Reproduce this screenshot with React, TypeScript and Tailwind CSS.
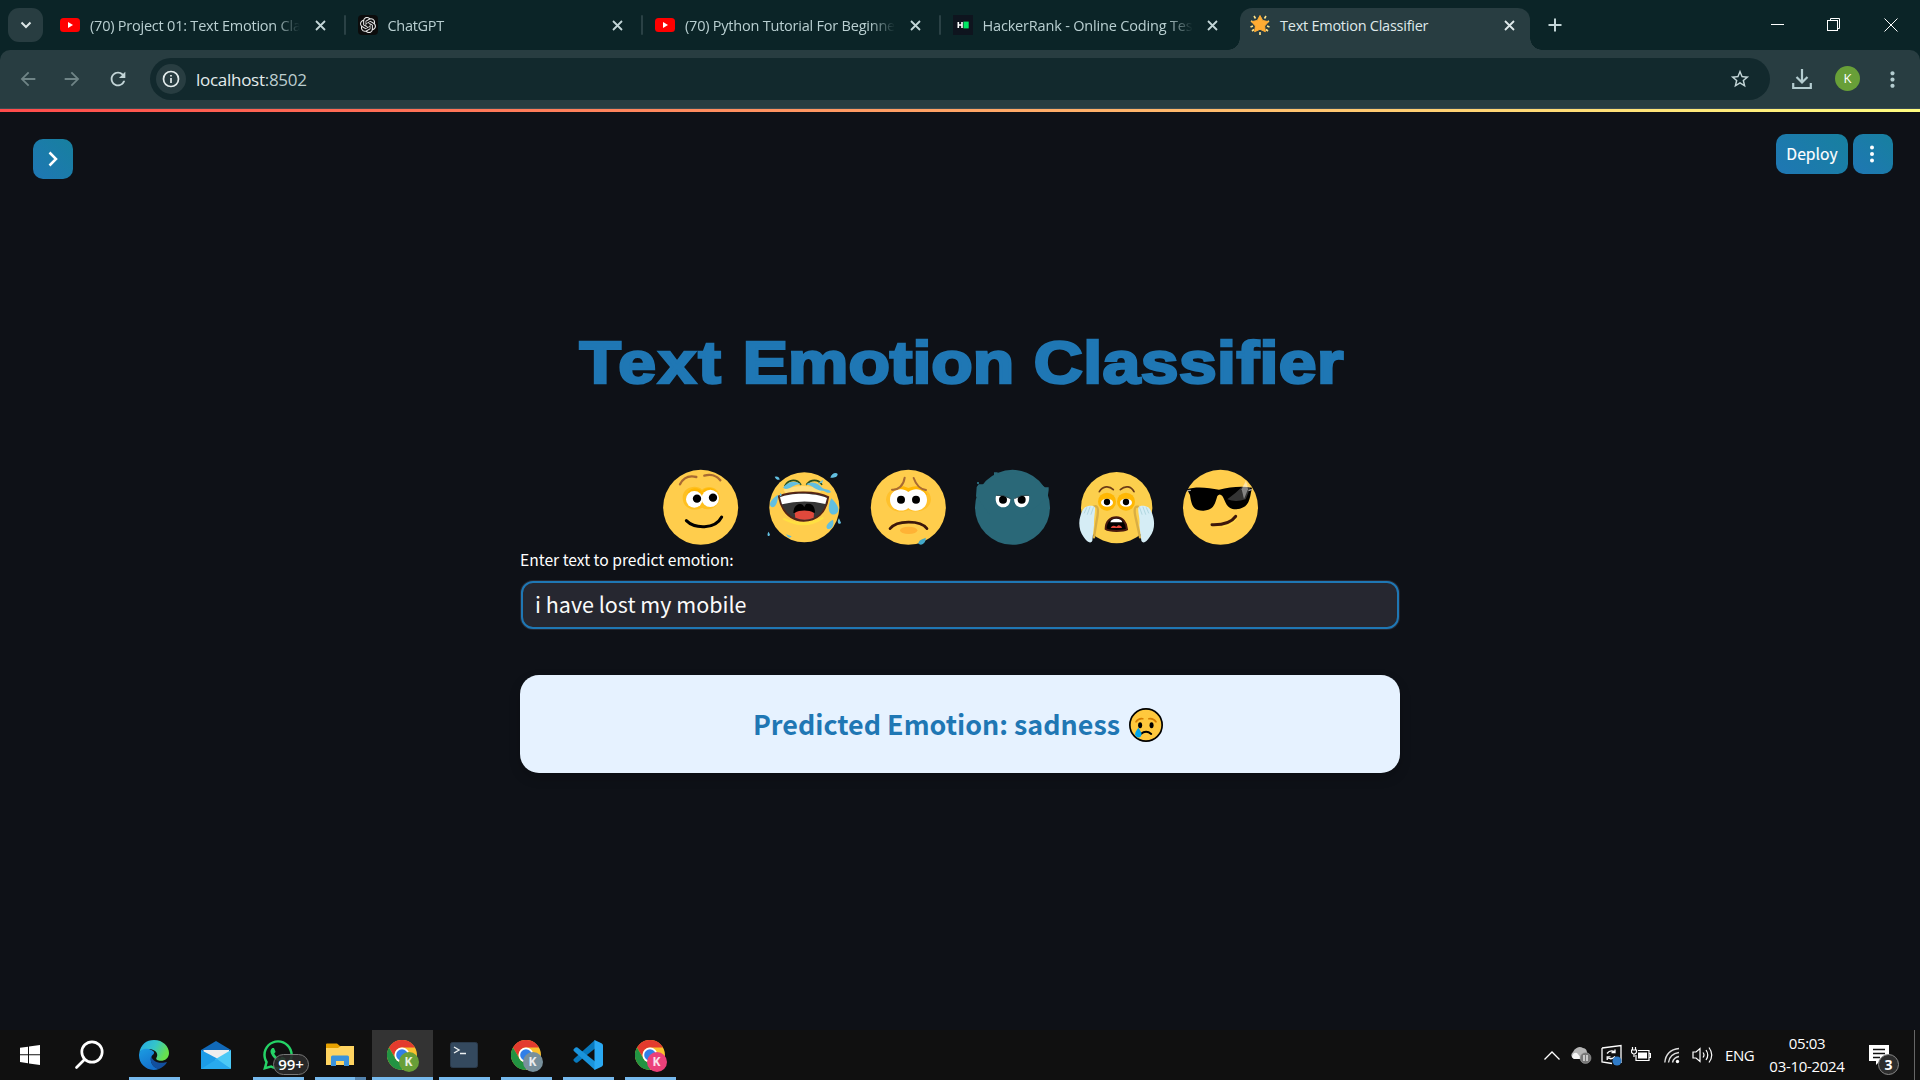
import React from 'react';
import { SiOpenai } from 'react-icons/si';
import { FaWhatsapp } from 'react-icons/fa';
import { MdArrowBack, MdArrowForward, MdRefresh, MdStarBorder, MdMoreVert } from 'react-icons/md';

const CloseX = () => (
  <svg className="h-[11px] w-[11px] shrink-0" viewBox="0 0 11 11" stroke="currentColor" strokeWidth="1.8">
    <path d="M1 1L10 10M10 1L1 10" />
  </svg>
);

const YouTube = () => (
  <svg className="h-5 w-5 shrink-0" viewBox="0 0 20 20">
    <rect x="0" y="3" width="20" height="14" rx="3.5" fill="#f00" />
    <path d="M8 7L13 10L8 13Z" fill="#fff" />
  </svg>
);

const ChatIcon = () => (
  <span className="flex h-5 w-5 shrink-0 items-center justify-center rounded-[4px] bg-[#0c0c0c]">
    <SiOpenai className="h-4 w-4 text-[#e8e8e8]" />
  </span>
);

const HackerRank = () => (
  <svg className="h-5 w-5 shrink-0" viewBox="0 0 20 20">
    <rect width="20" height="20" fill="#0e141e" />
    <path d="M5.3 7V13M9 7V13M5 10H9" stroke="#fff" strokeWidth="1.6" />
    <rect x="10.5" y="6.6" width="5.2" height="6.8" fill="#00ea64" />
  </svg>
);

const StarFavicon = () => (
  <svg className="h-5 w-5 shrink-0" viewBox="0 0 20 20">
    <path d="M4 1L5.5 3.5M16 1L14.5 3.5M.5 12L3 11M19.500 12L17 11M10 17V20M2 16L4 14.500M18 16L16 14.500M1 6L3 7M19 6L17 7" stroke="#ffe38a" strokeWidth="1.6" />
    <path d="M10 0.500L12.700 5.500L18.500 6.700L14.600 11L15.400 16.700L10 14.300L4.600 16.700L5.400 11L1.500 6.700L7.300 5.500Z" fill="#ffac33" stroke="#ffac33" strokeLinejoin="round" />
  </svg>
);

const Tab = ({ icon, title, tracking, sep }: { icon: React.ReactNode; title: string; tracking: string; sep?: boolean }) => (
  <div className="flex h-[34px] w-[297.500px] shrink-0 items-center">
    {icon}
    <span className={'ml-[10px] w-[210px] overflow-hidden whitespace-nowrap pt-[2px] text-[14.500px] text-[#b9cfd1] [mask-image:linear-gradient(to_right,black_184px,transparent_210px)] ' + tracking}>{title}</span>
    <span className="ml-[14.500px] flex text-[#c3d5d7]"><CloseX /></span>
    {sep && <span className="ml-[18px] h-5 w-[2px] rounded bg-[#2a4145]" />}
  </div>
);

const TabStrip = () => (
  <div className="flex h-[50px] items-start bg-[#0b2427]">
    <div className="ml-2 mt-2 flex h-[34px] w-[35px] shrink-0 items-center justify-center rounded-[11px] bg-[#283d41]">
      <svg width="12" height="8" viewBox="0 0 12 8" fill="none" stroke="#dce6e6" strokeWidth="2"><path d="M1.500 1.500L6 6L10.500 1.500" /></svg>
    </div>
    <div className="ml-[17px] mt-2 flex w-[1180px] shrink-0">
      <Tab icon={<YouTube />} title="(70) Project 01: Text Emotion Cla" tracking="tracking-[-0.22px]" sep />
      <Tab icon={<ChatIcon />} title="ChatGPT" tracking="tracking-[-0.3px]" sep />
      <Tab icon={<YouTube />} title="(70) Python Tutorial For Beginne" tracking="tracking-[-0.22px]" sep />
      <Tab icon={<HackerRank />} title="HackerRank - Online Coding Tes" tracking="tracking-[-0.18px]" />
    </div>
    <div className="relative mt-2 flex h-[42px] w-[290px] shrink-0 items-start rounded-t-[12px] bg-[#283d41]">
      <span className="absolute -left-3 bottom-0 h-3 w-3 bg-[radial-gradient(circle_at_0_0,transparent_11.500px,#283d41_12px)]" />
      <span className="absolute -right-3 bottom-0 h-3 w-3 bg-[radial-gradient(circle_at_100%_0,transparent_11.500px,#283d41_12px)]" />
      <div className="flex h-[34px] w-full items-center pl-[10px] text-[#dfe9ea]">
        <StarFavicon />
        <span className="ml-[10px] w-[224px] whitespace-nowrap pt-[2px] text-[14.500px] tracking-[-0.25px]">Text Emotion Classifier</span>
        <CloseX />
      </div>
    </div>
    <svg className="ml-[18px] mt-[18px] shrink-0" width="14" height="14" viewBox="0 0 14 14" stroke="#c3d5d7" strokeWidth="2"><path d="M7 .5V13.500M.5 7H13.500" /></svg>
    <svg className="ml-[209px] mt-[17px] shrink-0" width="13" height="14" viewBox="0 0 13 14" stroke="#fff"><path d="M0 7.500H13" /></svg>
    <svg className="ml-[43px] mt-[17px] shrink-0" width="14" height="15" viewBox="0 0 14 15" stroke="#fff" fill="none"><rect x=".5" y="3.500" width="10" height="10" /><path d="M3.500 3.500V1.500H12.500V11.500H10.500" /></svg>
    <svg className="ml-[43px] mt-[18px] shrink-0" width="14" height="14" viewBox="0 0 14 14" stroke="#fff"><path d="M.5 .5L13.500 13.500M13.500 .5L.5 13.500" /></svg>
  </div>
);

const Toolbar = () => (
  <div className="bg-[#0b2427]">
    <div className="flex h-[59px] items-center rounded-t-[10px] border-b border-[#3b4c52] bg-[#283d41]">
      <MdArrowBack className="ml-[17px] h-[22px] w-[22px] shrink-0 text-[#6f8486]" />
      <MdArrowForward className="ml-[22px] h-[22px] w-[22px] shrink-0 text-[#6f8486]" />
      <MdRefresh className="ml-[24px] h-[22px] w-[22px] shrink-0 text-[#c3d5d7]" />
      <div className="ml-[21px] flex h-[42px] w-[1620px] shrink-0 items-center rounded-full bg-[#12292d]">
        <span className="ml-[6px] flex h-[30px] w-[30px] items-center justify-center rounded-full bg-[#283d41]">
          <svg width="18" height="18" viewBox="0 0 18 18" fill="none" stroke="#e3ecec"><circle cx="9" cy="9" r="7.500" strokeWidth="1.700" /><path d="M9 8V13M9 5V6.500" strokeWidth="1.700" /></svg>
        </span>
        <span className="ml-[10px] pt-px text-[17px] tracking-[-0.280px] text-[#e3ecec]">localhost<span className="text-[#bccdcf]">:8502</span></span>
        <MdStarBorder className="ml-auto mr-[19px] h-[22px] w-[22px] text-[#c3d5d7]" />
      </div>
      <svg className="ml-[22px] shrink-0" width="20" height="22" viewBox="0 0 20 22" fill="none" stroke="#b4cdd0" strokeWidth="2.200"><path d="M10 1V14M4.500 9L10 14.500L15.500 9M1.200 15V20H18.800V15" /></svg>
      <span className="mb-px ml-[23px] flex h-[25px] w-[25px] shrink-0 items-center justify-center rounded-full bg-[#689f38] text-[13px] text-white">K</span>
      <MdMoreVert className="ml-[20px] h-[25px] w-[25px] shrink-0 text-[#b4cdd0]" />
    </div>
  </div>
);

const Emojis = () => (
  <div className="flex justify-center gap-6">
    <svg className="h-20 w-20" viewBox="60 36 240 240" overflow="visible" fill="none" strokeLinecap="round">
      <circle cx="182" cy="157" r="112.500" fill="#ffcd4c" />
      <path d="M128 130C126 98 168 86 186 104C206 86 240 100 239 128C238 158 205 170 187 158C160 172 129 160 128 130Z" fill="#ffc020" />
      <path d="M142 118C146 96 178 94 186 110C198 92 228 98 232 116Z" fill="#ffb703" />
      <circle cx="163" cy="133" r="25" fill="#fff" /><circle cx="211" cy="130" r="26" fill="#fff" />
      <circle cx="171" cy="131" r="12.500" fill="#000" /><circle cx="219" cy="128" r="12.500" fill="#000" />
      <path d="M120 88C130 68 148 61 169 66M193 62C213 56 231 63 241 76" stroke="#a86a32" strokeWidth="7" />
      <path d="M139 197C163 221 225 225 245 186" stroke="#000" strokeWidth="9" />
    </svg>
    <svg className="h-20 w-20" viewBox="372 36 240 240" overflow="visible" fill="none" strokeLinecap="round">
      <circle cx="493" cy="157" r="105" fill="#ffcd4c" />
      <path d="M432 192Q493 226 550 188Q490 218 432 192" fill="#ffe042" stroke="#ffe042" strokeWidth="6" />
      <path d="M430 104Q490 82 546 105L540 112Q490 105 436 114Z" fill="#ffdf80" />
      <path d="M435 92C447 71 472 72 482 88M500 88C512 72 535 72 545 88" stroke="#284f20" strokeWidth="5" />
      <path d="M429 98C445 78 467 76 483 88C465 84 454 101 437 102ZM498 88C518 77 533 83 547 99C556 105 565 101 573 110C567 118 557 110 549 107C527 108 520 92 498 88ZM533 86L549 74L547 83Z" fill="#62bfe0" />
      <path d="M416 124C453 108 530 108 565 126C558 176 528 198 491 198C454 196 426 175 416 124Z" fill="#363636" stroke="#552315" strokeWidth="5" />
      <path d="M420 127C453 111 529 113 561 129L556 147Q491 132 426 148Z" fill="#fff" />
      <path d="M460 174C460 151 478 143 488 149L493 156L498 147C518 143 525 156 525 173Z" fill="#000" />
      <path d="M464 174C479 165 505 164 522 174L521 188Q494 200 466 188Z" fill="#e0493c" />
      <path d="M414 119C395 132 386 144 392 154C401 163 414 149 414 119ZM574 130C557 166 571 183 585 178C604 169 594 150 574 130ZM579 194C559 205 555 217 564 222C577 224 583 210 579 194ZM597 190C588 202 598 212 603 203ZM386 230C378 240 386 249 390 239ZM438 238L455 244Q447 255 438 238ZM404 65Q417 62 419 74Q408 76 404 65ZM571 68C574 54 589 50 593 57C593 67 581 69 571 68ZM420 113L426 120L419 125Z" fill="#62bfe0" />
    </svg>
    <svg className="h-20 w-20" viewBox="684 36 240 240" overflow="visible" fill="none" strokeLinecap="round">
      <circle cx="805" cy="157" r="112.500" fill="#ffcd4c" />
      <path d="M738 133C742 99 778 89 805 102C833 88 872 99 873 134C870 166 829 177 806 165C778 178 741 167 738 133Z" fill="#ffc12c" />
      <path d="M753 120Q766 96 791 94L805 99Q847 82 862 120Z" fill="#ffb703" />
      <path d="M750 134C750 106 783 93 805 111C829 93 861 107 861 134C861 166 822 176 805 159C786 176 750 164 750 134Z" fill="#fff" />
      <circle cx="783" cy="134" r="12" fill="#000" /><circle cx="828" cy="134" r="12" fill="#000" />
      <path d="M756 104C775 106 791 91 794 68M821 69C829 92 840 103 858 105" stroke="#a86a32" strokeWidth="6" />
      <path d="M750 221C770 196 840 194 861 221" stroke="#3c170b" strokeWidth="8" />
      <ellipse cx="806" cy="226" rx="26" ry="11" fill="#ffb235" />
      <path d="M835 266C837 253 845 255 857 248C858 259 852 267 842 269Z" fill="#43a9c9" />
    </svg>
    <svg className="h-20 w-20" viewBox="36 36 240 240" overflow="visible" fill="none">
      <circle cx="157.500" cy="157" r="112.500" fill="#2a6878" />
      <path d="M48 124L50 96L56 88H72L102 62V52H113V58L155 52L210 66L255 97H266V106L263 126L200 180L90 180Z" fill="#2a6878" />
      <rect x="51" y="81" width="6" height="6" fill="#2a6878" />
      <path d="M108 122Q128 119 151 131C151 150 140 157 129 157C112 156 104 140 108 122ZM207 122Q186 119 162 131C162 149 173 157 185 157C202 156 210 139 207 122Z" fill="#fff" />
      <circle cx="129" cy="134" r="12" fill="#000" /><circle cx="185" cy="134" r="12" fill="#000" />
      <path d="M109 121Q129 117 152 131M207 121Q185 117 163 131" stroke="#2d4b52" strokeWidth="3" />
    </svg>
    <svg className="h-20 w-20" viewBox="348 36 240 240" overflow="visible" fill="none" strokeLinecap="round">
      <circle cx="470" cy="158" r="107" fill="#fccf4d" />
      <circle cx="441" cy="140" r="27" fill="#ffb703" /><circle cx="498" cy="140" r="27" fill="#ffb703" />
      <path d="M418 110C429 92 448 92 460 104M481 104C496 90 514 94 522 110" stroke="#6e3d16" strokeWidth="5" />
      <ellipse cx="441" cy="143" rx="18" ry="12" fill="#fff" /><ellipse cx="498" cy="143" rx="18" ry="12" fill="#fff" />
      <circle cx="441" cy="141" r="9.500" fill="#000" /><circle cx="498" cy="141" r="9.500" fill="#000" />
      <path d="M437 222C437 200 450 187 469 187C488 187 500 203 501 223C491 229 448 230 437 222Z" fill="#000" stroke="#4a1a0e" strokeWidth="6" />
      <path d="M451 202Q453 191 469 191Q485 191 487 202Z" fill="#fff" />
      <path d="M452 219Q456 210 465 213L469 215L475 211Q484 211 486 219Z" fill="#e24438" />
      <path d="M402 155C417 148 415 174 410 197L402 247M534 155C520 152 523 174 529 197L540 247" stroke="#d9ae43" strokeWidth="7" />
      <path d="M375 157C384 151 402 150 405 158C406 171 401 190 402 210L397 257C393 267 381 262 371 246C357 228 355 202 361 184C364 172 369 162 375 157ZM565 157C556 151 538 150 535 158C533 174 541 190 538 210L544 257C549 267 559 262 569 246C585 225 584 201 579 184C576 172 571 162 565 157Z" fill="#d5edf5" />
      <path d="M373 174L380 158M382 178L390 156M393 178L400 158M566 174L559 158M557 178L549 156M546 178L539 158" stroke="#9fcbd5" strokeWidth="2" />
    </svg>
    <svg className="h-20 w-20" viewBox="660 36 240 240" overflow="visible" fill="none" strokeLinecap="round">
      <circle cx="781.500" cy="157" r="112.500" fill="#ffcd4c" />
      <path d="M681 103C710 92 748 99 777 104C809 96 846 92 876 98L873 112C868 143 861 160 829 163C799 164 797 139 787 123Q779 114 772 123C764 151 760 164 731 167C699 168 694 149 690 120Z" fill="#000" />
      <path d="M827 113L861 82L871 98L857 133Q827 143 802 133Z" fill="#fff" opacity=".2" />
      <path d="M858 76L864 103L852 132L845 103Z" fill="#fff" opacity=".4" />
      <path d="M684 107L691 106M867 106L874 104" stroke="#aaa" strokeWidth="4" />
      <path d="M756 209C789 210 813 204 827 184" stroke="#3c170b" strokeWidth="9" />
      <path d="M788 215Q817 211 828 193" stroke="#ffe34c" strokeWidth="3" />
    </svg>
  </div>
);

const SadFace = () => (
  <svg className="h-[34px] w-[34px]" viewBox="508 443 101 101" fill="none" strokeLinecap="round">
    <circle cx="558.500" cy="493.500" r="48" fill="#ffc83d" stroke="#000" strokeWidth="5" />
    <path d="M529 484Q536 473 549 475M567 475Q581 473 588 484" stroke="#d67d00" strokeWidth="5" />
    <ellipse cx="541" cy="494" rx="6" ry="9" fill="#000" /><ellipse cx="575" cy="494" rx="6" ry="9" fill="#000" />
    <path d="M543 520Q559 507 574 520" stroke="#000" strokeWidth="6" />
    <path d="M536 502Q547 518 545 523C541 534 529 533 526 522Q526 514 536 502Z" fill="#00a6ed" />
  </svg>
);

const grad = 'bg-[linear-gradient(45deg,#1f77b4,#17809f)]';

const Page = () => (
  <main className="flex h-[918px] flex-col bg-[#0e1117] font-['Noto_Sans_CJK_SC','Noto_Sans',sans-serif] text-white">
    <div className="flex h-[88px] items-start justify-between pl-[33px] pr-[27px]">
      <button className={'mt-[27px] flex h-10 w-10 items-center justify-center rounded-[10px] ' + grad}>
        <svg width="10" height="16" viewBox="0 0 10 16" fill="none" stroke="#fff" strokeWidth="2.500"><path d="M1.500 1.500L8 8L1.500 14.500" /></svg>
      </button>
      <div className="mt-[22px] flex gap-[5px]">
        <button className={'flex h-10 w-[72px] items-center justify-center rounded-[10px] text-[15.700px] [-webkit-text-stroke:0.150px_white] ' + grad}>Deploy</button>
        <button className={'flex h-10 w-10 items-center justify-center rounded-[10px] pr-[2px] ' + grad}>
          <svg width="4" height="18" viewBox="0 0 4 18" fill="#fff"><circle cx="2" cy="2.500" r="2" /><circle cx="2" cy="9" r="2" /><circle cx="2" cy="15.500" r="2" /></svg>
        </button>
      </div>
    </div>
    <div className="mx-auto flex w-[880px] flex-col">
      <h1 className="mt-[123px] flex h-[80px] origin-center scale-x-[1.15] items-center justify-center whitespace-nowrap pl-[3px] font-['Liberation_Sans',sans-serif] text-[59px] font-bold leading-none text-[#1f77b4] [-webkit-text-stroke:2.600px_#1f77b4]">
        <span className="mr-[17px] tracking-[2px]">Text</span>
        <span className="mr-[17px]">Emotion</span>
        <span className="tracking-[0.400px]">Classifier</span>
      </h1>
      <div className="mt-[64px]"><Emojis /></div>
      <label className="flex h-[25px] items-center text-[15.650px]">Enter text to predict emotion:</label>
      <div className="mt-[8px] flex h-[50px] items-center rounded-[13px] bg-[#262730] p-px">
        <div className="flex h-12 w-full items-center rounded-[12px] border-2 border-[#1f77b4] pb-[2px] pl-[12px] text-[21.500px] text-[#fafafa]">i have lost my mobile</div>
      </div>
      <div className="mt-[45px] flex h-[98px] items-center justify-center gap-[9px] rounded-[19px] bg-[#e6f2ff] pr-[4px] text-[26.900px] font-bold text-[#1f77b4] shadow-[0_5px_12px_rgba(0,0,0,0.2)]">
        <span>Predicted Emotion: sadness</span><span className="mt-[2px]"><SadFace /></span>
      </div>
    </div>
  </main>
);

const Chrome = ({ badge }: { badge: string }) => (
  <span className="relative block h-[30px] w-[30px]">
    <svg className="h-[30px] w-[30px]" viewBox="0 0 30 30">
      <circle cx="15" cy="15" r="15" fill="#fbc12e" />
      <path d="M2 7.500A15 15 0 0 1 28 7.500H15A7.500 7.500 0 0 0 8.500 18.700Z" fill="#e33b2e" />
      <path d="M2 7.500A15 15 0 0 0 15 30L21.500 18.750A7.500 7.500 0 0 1 8.500 18.750Z" fill="#229342" />
      <circle cx="15" cy="15" r="7.500" fill="#fff" /><circle cx="15" cy="15" r="5.800" fill="#317fe8" />
    </svg>
    <span className={'absolute left-[12px] top-[12px] flex h-5 w-5 items-center justify-center rounded-full text-[12px] font-bold leading-none text-white/85 ' + badge}>K</span>
  </span>
);

const Item = ({ children, line, active }: { children: React.ReactNode; line?: boolean; active?: boolean }) => (
  <div className={'relative flex h-[50px] w-[61px] shrink-0 items-center justify-center pr-[2px] ' + (active ? 'bg-[#333]' : '')}>
    {children}
    {line && <span className={'absolute bottom-0 h-[3px] bg-[#76b9ed] ' + (active ? 'inset-x-0' : 'inset-x-[5px]')} />}
  </div>
);

const Taskbar = () => (
  <footer className="flex h-[50px] items-center justify-between bg-[#101010] text-white">
    <div className="flex gap-px">
      <Item><svg width="20" height="20" viewBox="0 0 20 20" fill="#fff"><path d="M0 2.800L8 1.700V9.300H0ZM9 1.500L20 0V9.300H9ZM0 10.300H8V18.200L0 17.100ZM9 10.300H20V20L9 18.400Z" /></svg></Item>
      <Item><svg className="-ml-[5px]" width="30" height="30" viewBox="0 0 30 30" fill="none" stroke="#fff" strokeWidth="2.700" strokeLinecap="round"><circle cx="18" cy="12" r="10.200" /><path d="M10.500 19.500L2.500 27.500" /></svg></Item>
      <Item line>
        <svg width="30" height="30" viewBox="0 0 30 30">
          <defs>
            <linearGradient id="eg" x1="0" x2="1" y1="0" y2=".4"><stop offset="0" stopColor="#23a7e8" /><stop offset=".55" stopColor="#35c5c9" /><stop offset="1" stopColor="#67e04d" /></linearGradient>
            <linearGradient id="eb" x1="0" x2=".5" y1="0" y2="1"><stop offset="0" stopColor="#1b9de2" /><stop offset="1" stopColor="#1470cc" /></linearGradient>
          </defs>
          <path d="M.3 13C1.500 4.500 7.500 0 15 0C24 0 30 6.500 30 13C30 18 26 20.800 22 20.800C18.500 20.800 16.800 19.300 17.300 18C19.500 15 18 11 13 9.500C8 8 2 10 .3 13Z" fill="url(#eg)" />
          <path d="M.1 14C1 8.500 8 7.500 12.500 10C15.500 11.500 16 13 13.500 15C10 18.500 12 27 20 28.900C9 33 -1 24 .1 14Z" fill="url(#eb)" />
          <path d="M12.300 15.500C10 21.500 14 28.500 20 28.900C24 27.500 27 24.500 28 22C25 23 18 23.500 15 20.500Q12 18 12.300 15.500Z" fill="#124f9e" />
        </svg>
      </Item>
      <Item>
        <svg width="30" height="28" viewBox="0 0 30 28">
          <path d="M0 9L15 0L30 9V14H0Z" fill="#1169b8" /><path d="M2.500 9H28V16L15 22L2.500 15Z" fill="#eee" />
          <path d="M0 9L19 19L30 28H0Z" fill="#1c9be6" /><path d="M30 9L14 18.500L30 28Z" fill="#4cc9f6" /><path d="M0 28L16 18L30 28Z" fill="#28a9ee" />
        </svg>
      </Item>
      <Item line>
        <FaWhatsapp className="h-[34px] w-[34px] text-[#25d366]" />
        <span className="absolute left-[25px] top-6 flex h-[21px] w-9 items-center justify-center rounded-full border border-[#777] bg-[#2a2a2a]/90 text-[15px] font-semibold leading-none">99+</span>
      </Item>
      <Item line>
        <svg width="30" height="24" viewBox="0 0 30 24">
          <path d="M1 4V1.500Q1 .5 2 .5H12L15 3H28Q29 3 29 4V22H1Z" fill="#e6a100" /><path d="M1 5H13L16 3H29V22H1Z" fill="#ffd461" />
          <path d="M6 23V14Q6 12.500 7.500 12.500H22.500Q24 12.500 24 14V23H19V18H11V23Z" fill="#3b93dc" />
        </svg>
        <span className="absolute bottom-0 right-[5px] z-10 h-[3px] w-[11px] bg-[#5383ad]" />
      </Item>
      <Item line active><Chrome badge="bg-[#689f38]" /></Item>
      <Item line>
        <svg width="28" height="26" viewBox="0 0 28 26"><rect x=".5" y=".5" width="27" height="25" rx="2" fill="#34495e" stroke="#2a3a4b" /><path d="M4 5L9 8L4 11M10 11.500H16" fill="none" stroke="#ecf0f1" strokeWidth="1.400" /></svg>
      </Item>
      <Item line><Chrome badge="bg-[#78909c]" /></Item>
      <Item line>
        <svg width="30" height="30" viewBox="0 0 30 30">
          <path d="M22 8.500L4.500 22.500Q3.500 23.200 2.500 22.500L.8 20.900Q0 20 .8 19L22 0Z" fill="#0879bd" />
          <path d="M22 21.500L4.500 7.500Q3.500 6.800 2.500 7.500L.8 9.100Q0 10 .8 11L22 30Z" fill="#1a94dc" />
          <path d="M21.500 0L28.500 3.200Q30 4 30 5.500V24.500Q30 26 28.500 26.800L21.500 30Z" fill="#2aa9f3" />
        </svg>
      </Item>
      <Item line><Chrome badge="bg-[#ec407a]" /></Item>
    </div>
    <div className="flex h-full items-center">
      <svg width="16" height="9" viewBox="0 0 16 9" fill="none" stroke="#fff" strokeWidth="1.300"><path d="M.5 8.500L8 1L15.500 8.500" /></svg>
      <svg className="ml-[11px]" width="21" height="18" viewBox="0 0 21 18"><path d="M3 13A4 4 0 0 1 2 6A7 7 0 0 1 12 2A5 5 0 0 1 16 7V13Z" fill="#b5b5b5" /><path d="M1 11Q2 6 6 7L11 13H3Z" fill="#f4f4f4" /><circle cx="14.500" cy="12" r="5.500" fill="#777" stroke="#aaa" strokeWidth=".5" /><path d="M13 9V15M16 9V15" stroke="#fff" strokeWidth="1.200" /></svg>
      <svg className="ml-[9px]" width="21" height="22" viewBox="0 0 21 22" fill="none" stroke="#fff" strokeWidth="1.300"><path d="M1 4L20 1.500V19M1 4V18L11 19.500M6 9.500Q9 5.500 13.500 7.500M14 5.500V8.500H10.500M14 12.500Q11 16 7 14M6.200 16V12.800H9.500" /><circle cx="16" cy="17" r="4.500" fill="#2f7bc8" stroke="none" /></svg>
      <svg className="ml-[9px]" width="20" height="16" viewBox="0 0 20 16" fill="none" stroke="#fff" strokeWidth="1.200"><path d="M7 3.500H18V13.500H5V8M18.500 6.500H19.500V10.500H18.500M1.500 0V2.500M4.500 0V2.500M.5 3H5.500V5Q5 7 3 7Q1 7 .5 5ZM3 7V10" /><path d="M7 5.500H16V11.500H7Z" fill="#fff" stroke="none" /></svg>
      <svg className="ml-[13px]" width="16" height="17" viewBox="0 0 16 17" fill="none" stroke="#ddd" strokeWidth="1.400"><path d="M.8 15.500Q2 3 15 1.500M4.500 15.500Q5.500 7 15 5.500M8.500 15.500Q9.500 10.500 15 9.500" /><circle cx="13.500" cy="14.500" r="1.700" fill="#fff" stroke="none" /></svg>
      <svg className="ml-[12px]" width="21" height="18" viewBox="0 0 21 18" fill="none" stroke="#fff" strokeWidth="1.200"><path d="M1 6H4L8 2.500V15.500L4 12H1ZM11 6.500Q13 9 11 11.500M14 4Q17.500 9 14 14M17 1.500Q22.500 9 17 16.500" /></svg>
      <span className="ml-[12px] w-[29px] text-[15px] tracking-[-0.400px]">ENG</span>
      <span className="ml-[12px] flex w-[82px] flex-col items-center text-[15px] leading-[23px] tracking-[-0.300px]"><span>05:03</span><span className="whitespace-nowrap">03-10-2024</span></span>
      <span className="relative ml-[21px] mr-[19px] h-5 w-[26px]">
        <svg width="20" height="20" viewBox="0 0 20 20"><path d="M0 0H20V16H11L7 20V16H0Z" fill="#fff" /><path d="M4 4.500H16M4 8.500H16M4 12.500H11" stroke="#111" strokeWidth="1.300" /></svg>
        <span className="absolute left-[9px] top-[9px] flex h-[21px] w-[21px] items-center justify-center rounded-full border border-[#888] bg-[#2d2d2d] text-[14px] font-bold leading-none">3</span>
      </span>
      <span className="mr-[5px] h-full w-px bg-[#666]" />
    </div>
  </footer>
);

export default function App() {
  return (
    <div className="flex h-[1080px] w-[1920px] flex-col overflow-hidden bg-[#0e1117] font-['Open_Sans','Noto_Sans',sans-serif]">
      <TabStrip />
      <Toolbar />
      <div className="h-[3px] bg-[linear-gradient(90deg,#ff4b4b,#fffd80)]" />
      <Page />
      <Taskbar />
    </div>
  );
}
